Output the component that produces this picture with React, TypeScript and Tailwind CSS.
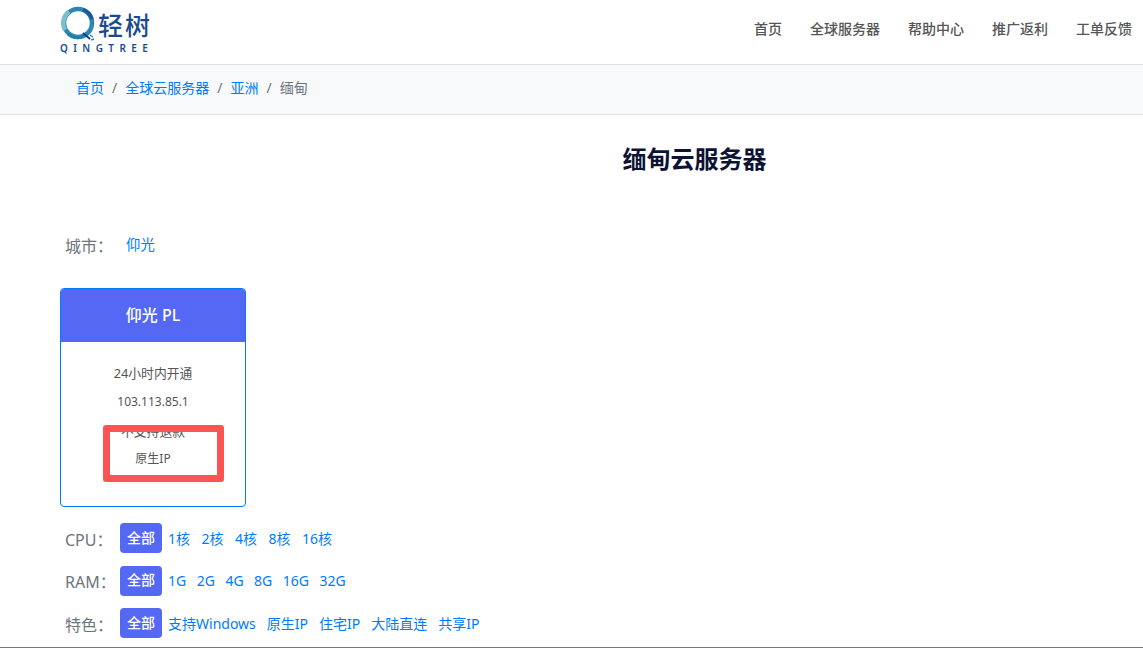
const font = "[font-family:'Noto_Sans','Noto_Sans_CJK_SC',sans-serif]";

function Logo() {
  return (
    <div className="flex flex-col w-[100px] ml-[60px] pt-[5px]">
      <div className="flex items-center h-[38px]">
        <svg width="38" height="38" viewBox="0 0 38 38" fill="none" className="shrink-0">
          <circle cx="18" cy="18" r="14" stroke="#2a86b4" strokeWidth="4.5" />
          <path d="M5 25A14.5 14.5 0 0 1 9 6.500" stroke="#7cc0cf" strokeWidth="4.5" />
          <path d="M23 4.500A14.500 14.500 0 0 1 32 14" stroke="#1a5a9a" strokeWidth="3.500" />
          <path d="M8 29A14 14 0 0 0 24 31" stroke="#1f7fa8" strokeWidth="3" />
          <path d="M23 28l7 6" stroke="#123f86" strokeWidth="2" />
          <path d="M30 30l3 2M31 35l3-1" stroke="#2a86b4" strokeWidth="1.500" />
        </svg>
        <span className="text-[25px] leading-none font-medium text-[#1b4a8f] tracking-[2px] mt-[3px] whitespace-nowrap">轻树</span>
      </div>
      <span className="text-[10px] leading-[10px] font-semibold tracking-[5.4px] text-[#1b4a8f] whitespace-nowrap">QINGTREE</span>
    </div>
  );
}

function FilterRow({ label, items, gap }: { label: string; items: string[]; gap: string }) {
  return (
    <div className="flex items-center h-[30px] pl-[60px]">
      <span className="w-[55px] ml-[5px] text-[16px] text-[#6c757d] mt-[3px] whitespace-nowrap">{label}</span>
      <span className="h-[30px] w-[42px] rounded bg-[#5468f4] text-white text-[14px] font-medium flex items-center justify-center pb-[2px]">全部</span>
      <div className={`flex items-center ml-[6px] text-[14px] text-[#007bff] ${gap} whitespace-nowrap`}>
        {items.map((item) => (
          <a key={item} href="#">{item}</a>
        ))}
      </div>
    </div>
  );
}

export default function App() {
  return (
    <div className={`${font} h-[648px] w-[1143px] overflow-hidden bg-white relative border-b border-[#777]`}>
      <header className="h-[65px] flex items-start justify-between border-b border-[#dee2e6]">
        <Logo />
        <nav className="flex gap-[28px] pt-[19px] pr-[11px] text-[14px] leading-[20px] font-medium text-[#555]">
          <a href="#">首页</a>
          <a href="#">全球服务器</a>
          <a href="#">帮助中心</a>
          <a href="#">推广返利</a>
          <a href="#">工单反馈</a>
        </nav>
      </header>

      <div className="h-[50px] bg-[#f8f9fa] border-b border-[#dee2e6] flex items-center pl-[76px] pb-[4px] text-[14px] text-[#6c757d]">
        <a href="#" className="text-[#007bff]">首页</a>
        <span className="px-[8px]">/</span>
        <a href="#" className="text-[#007bff]">全球云服务器</a>
        <span className="px-[8px]">/</span>
        <a href="#" className="text-[#007bff]">亚洲</a>
        <span className="px-[8px]">/</span>
        <span>缅甸</span>
      </div>

      <h1 className="text-[24px] leading-[32px] font-bold text-[#0d1333] text-center pl-[246px] pt-[28px]">缅甸云服务器</h1>

      <div className="flex items-center pl-[65px] mt-[55px] h-[30px]">
        <span className="text-[16px] text-[#6c757d] w-[61px] mt-[1px]">城市：</span>
        <a href="#" className="text-[14.4px] text-[#007bff] -mt-[1px]">仰光</a>
      </div>

      <div className="relative ml-[60px] mt-[28px] w-[186px] h-[219px] rounded border border-[#007bff] overflow-hidden">
        <div className="h-[53px] bg-[#5468f4] text-white text-[16px] font-medium flex items-center justify-center pb-[2px]">仰光 PL</div>
        <div className="flex flex-col items-center pt-[17px] text-[12.8px] leading-[28.8px] text-[#555]">
          <span>24小时内开通</span>
          <span className="text-[12px]">103.113.85.1</span>
          <span>不支持退款</span>
          <span className="text-[12px]">原生IP</span>
        </div>
      </div>

      <div className="absolute left-[103px] top-[425px] w-[121px] h-[57px] rounded-[3px] border-[7px] border-[#fc5353]" />

      <div className="flex flex-col gap-[12.5px] pt-[16px]">
        <FilterRow label="CPU：" items={["1核", "2核", "4核", "8核", "16核"]} gap="gap-[11.5px]" />
        <FilterRow label="RAM：" items={["1G", "2G", "4G", "8G", "16G", "32G"]} gap="gap-[10.5px]" />
        <FilterRow label="特色：" items={["支持Windows", "原生IP", "住宅IP", "大陆直连", "共享IP"]} gap="gap-[11px]" />
      </div>
    </div>
  );
}
